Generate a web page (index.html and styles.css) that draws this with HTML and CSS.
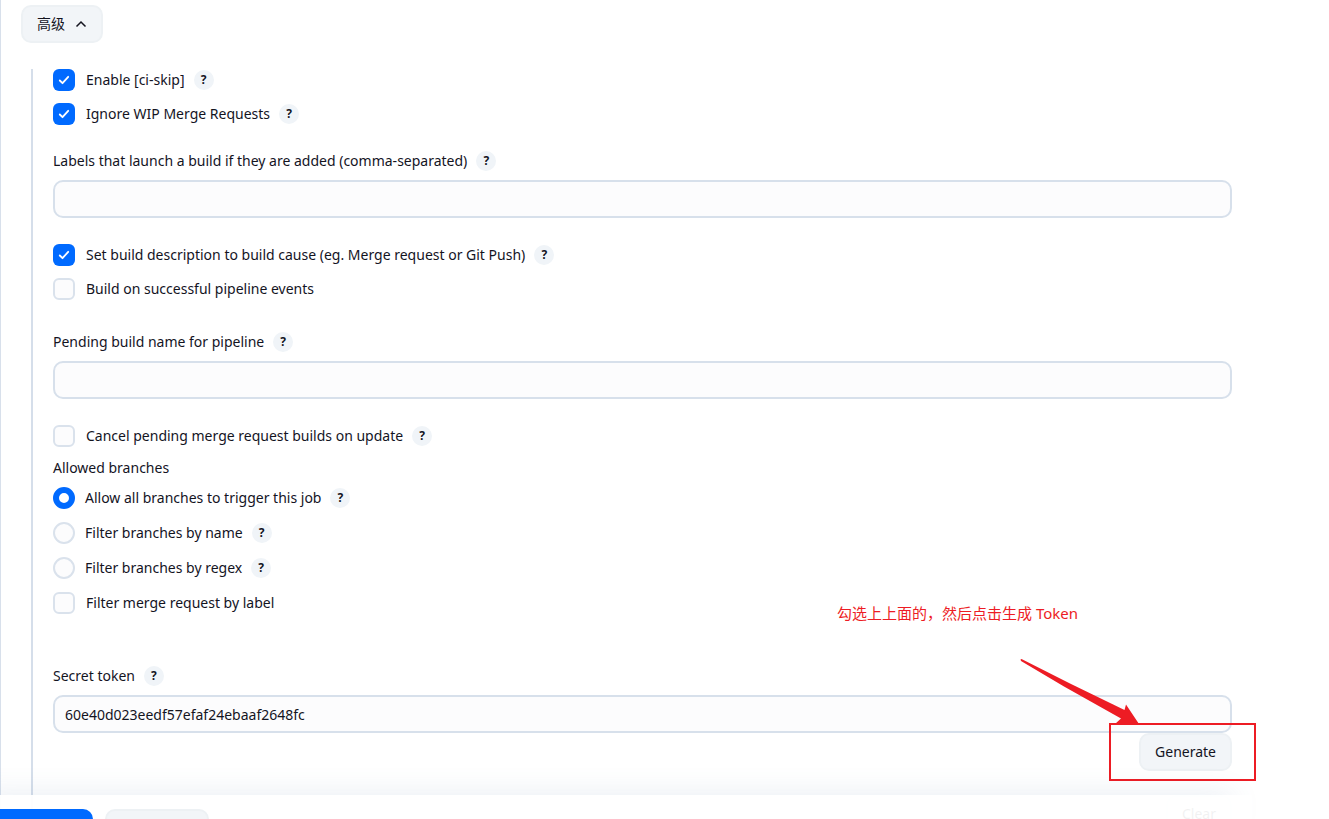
FILE: index.html
```html
<!DOCTYPE html>
<html lang="zh-CN">
<head>
    <meta charset="UTF-8">
    <title>Build Triggers</title>
    <link rel="stylesheet" href="styles.css">
</head>
<body>
    <main class="config">
        <button type="button" class="btn advanced-btn">
            高级
            <svg class="chevron" viewBox="0 0 12 12" aria-hidden="true"><path d="M1.5 8.5L6 4l4.5 4.5"/></svg>
        </button>

        <form class="advanced" id="config-form">
            <div class="group">
                <div class="check-row">
                    <input type="checkbox" id="ci-skip" checked>
                    <label for="ci-skip">Enable [ci-skip]</label>
                    <a href="#" class="help">?</a>
                </div>
                <div class="check-row">
                    <input type="checkbox" id="ignore-wip" checked>
                    <label for="ignore-wip">Ignore WIP Merge Requests</label>
                    <a href="#" class="help">?</a>
                </div>
            </div>

            <div class="field">
                <div class="field-label">
                    <label for="labels">Labels that launch a build if they are added (comma-separated)</label>
                    <a href="#" class="help">?</a>
                </div>
                <input type="text" class="text-input" id="labels">
            </div>

            <div class="group">
                <div class="check-row">
                    <input type="checkbox" id="build-desc" checked>
                    <label for="build-desc">Set build description to build cause (eg. Merge request or Git Push)</label>
                    <a href="#" class="help">?</a>
                </div>
                <div class="check-row">
                    <input type="checkbox" id="pipeline-events">
                    <label for="pipeline-events">Build on successful pipeline events</label>
                </div>
            </div>

            <div class="field spaced">
                <div class="field-label">
                    <label for="pending-name">Pending build name for pipeline</label>
                    <a href="#" class="help">?</a>
                </div>
                <input type="text" class="text-input" id="pending-name">
            </div>

            <div class="check-row">
                <input type="checkbox" id="cancel-pending">
                <label for="cancel-pending">Cancel pending merge request builds on update</label>
                <a href="#" class="help">?</a>
            </div>

            <fieldset class="branches">
                <legend>Allowed branches</legend>
                <div class="radio-row">
                    <input type="radio" name="branches" id="branch-all" checked>
                    <label for="branch-all">Allow all branches to trigger this job</label>
                    <a href="#" class="help">?</a>
                </div>
                <div class="radio-row">
                    <input type="radio" name="branches" id="branch-name">
                    <label for="branch-name">Filter branches by name</label>
                    <a href="#" class="help">?</a>
                </div>
                <div class="radio-row">
                    <input type="radio" name="branches" id="branch-regex">
                    <label for="branch-regex">Filter branches by regex</label>
                    <a href="#" class="help">?</a>
                </div>
                <div class="check-row">
                    <input type="checkbox" id="filter-label">
                    <label for="filter-label">Filter merge request by label</label>
                </div>
            </fieldset>

            <div class="token">
                <div class="field-label">
                    <label for="secret-token">Secret token</label>
                    <a href="#" class="help">?</a>
                </div>
                <input type="text" class="text-input" id="secret-token" value="60e40d023eedf57efaf24ebaaf2648fc">
                <div class="token-actions">
                    <button type="button" class="btn">Generate</button>
                    <button type="button" class="btn">Clear</button>
                </div>
                <p class="note">勾选上上面的，然后点击生成 Token</p>
                <svg class="arrow" viewBox="0 0 120 66" aria-hidden="true"><path d="M0.5 0.5L1.5 0 50 24.5 104.500 51 106 45.500 119 65H95L101 59.500 44 27.500 1 2z"/></svg>
                <div class="highlight"></div>
            </div>
        </form>
    </main>

    <div class="bottom-bar">
        <button type="submit" form="config-form" class="bar-btn primary" aria-label="保存"></button>
        <button type="button" class="bar-btn" aria-label="应用"></button>
    </div>
</body>
</html>
```
FILE: styles.css
```css
* {
    box-sizing: border-box;
}
body {
    margin: 0;
    height: 100vh;
    overflow: hidden;
    background: #fff;
    color: #14141f;
    font-family: "Noto Sans", "Noto Sans CJK SC", sans-serif;
    font-size: 14px;
    line-height: 22px;
}
button, input {
    font: inherit;
    color: inherit;
}
.config {
    min-height: 100vh;
    padding: 5px 97px 0 20px;
    border-left: 1px solid #d8e0eb;
}
.btn {
    height: 38px;
    padding: 0 14px;
    background: #f2f5f8;
    border: 2px solid #edf1f4;
    border-radius: 10px;
    cursor: pointer;
}
.advanced-btn {
    display: flex;
    align-items: center;
    gap: 10px;
}
.chevron {
    width: 12px;
    height: 12px;
    fill: none;
    stroke: #14141f;
    stroke-width: 1.5;
}
.advanced {
    margin: 26px 0 0 10px;
    padding-left: 20px;
    border-left: 2px solid #d5deea;
}
.group {
    display: flex;
    flex-direction: column;
    gap: 12px;
}
.check-row, .radio-row, .field-label {
    display: flex;
    align-items: center;
    height: 22px;
}
.check-row input, .radio-row input {
    appearance: none;
    flex: none;
    width: 22px;
    height: 22px;
    margin: 0 11px 0 0;
    background: #fcfcfd;
    border: 2px solid #dae2ec;
    border-radius: 6px;
}
.check-row input:checked {
    border: none;
    background: #006aff url("data:image/svg+xml,%3Csvg xmlns='http://www.w3.org/2000/svg' viewBox='0 0 22 22'%3E%3Cpath d='M6.8 11.5l2.7 2.7 5.7-6.4' fill='none' stroke='%23fff' stroke-width='1.8' stroke-linecap='round' stroke-linejoin='round'/%3E%3C/svg%3E");
}
.radio-row input {
    margin-right: 10px;
    border-radius: 50%;
}
.radio-row input:checked {
    background: #fff;
    border: 6px solid #006aff;
}
.help {
    display: flex;
    align-items: center;
    justify-content: center;
    width: 20px;
    height: 20px;
    margin-left: 9px;
    background: #f0f4f8;
    border-radius: 50%;
    color: #14141f;
    font-size: 12px;
    font-weight: 700;
    text-decoration: none;
}
.field {
    margin: 25px 0 26px;
}
.field.spaced {
    margin-top: 31px;
}
.text-input {
    display: block;
    width: 100%;
    height: 38px;
    margin-top: 8px;
    padding: 0 10px;
    background: #fcfcfd;
    border: 2px solid #d7e0eb;
    border-radius: 10px;
}
.branches {
    display: flex;
    flex-direction: column;
    gap: 13px;
    margin: 10px 0 0;
    padding: 0;
    border: none;
}
.branches legend {
    margin-bottom: 8px;
    padding: 0;
}
.token {
    position: relative;
    margin-top: 51px;
}
.token-actions {
    display: flex;
    flex-direction: column;
    align-items: flex-end;
    gap: 24px;
}
.note {
    position: absolute;
    top: -63px;
    right: 154px;
    margin: 0;
    color: #ed1c24;
    font-size: 15px;
}
.arrow {
    position: absolute;
    top: -6px;
    right: 92px;
    width: 120px;
    height: 66px;
    fill: #ed1c24;
}
.highlight {
    position: absolute;
    top: 58px;
    right: -24px;
    width: 147px;
    height: 58px;
    border: 2px solid #ed1c24;
    pointer-events: none;
}
.bottom-bar {
    position: fixed;
    left: 0;
    right: 77px;
    bottom: 0;
    display: flex;
    gap: 12px;
    height: 24px;
    padding-top: 14px;
    background: rgba(255, 255, 255, 0.94);
    box-shadow: -20px 0 30px rgba(80, 110, 160, 0.14);
}
.bar-btn {
    width: 104px;
    height: 38px;
    padding: 0;
    background: #f2f5f8;
    border: 2px solid #edf1f4;
    border-radius: 10px;
}
.bar-btn.primary {
    width: 93px;
    background: #006aff;
    border: none;
    border-radius: 0 10px 10px 0;
}
```
